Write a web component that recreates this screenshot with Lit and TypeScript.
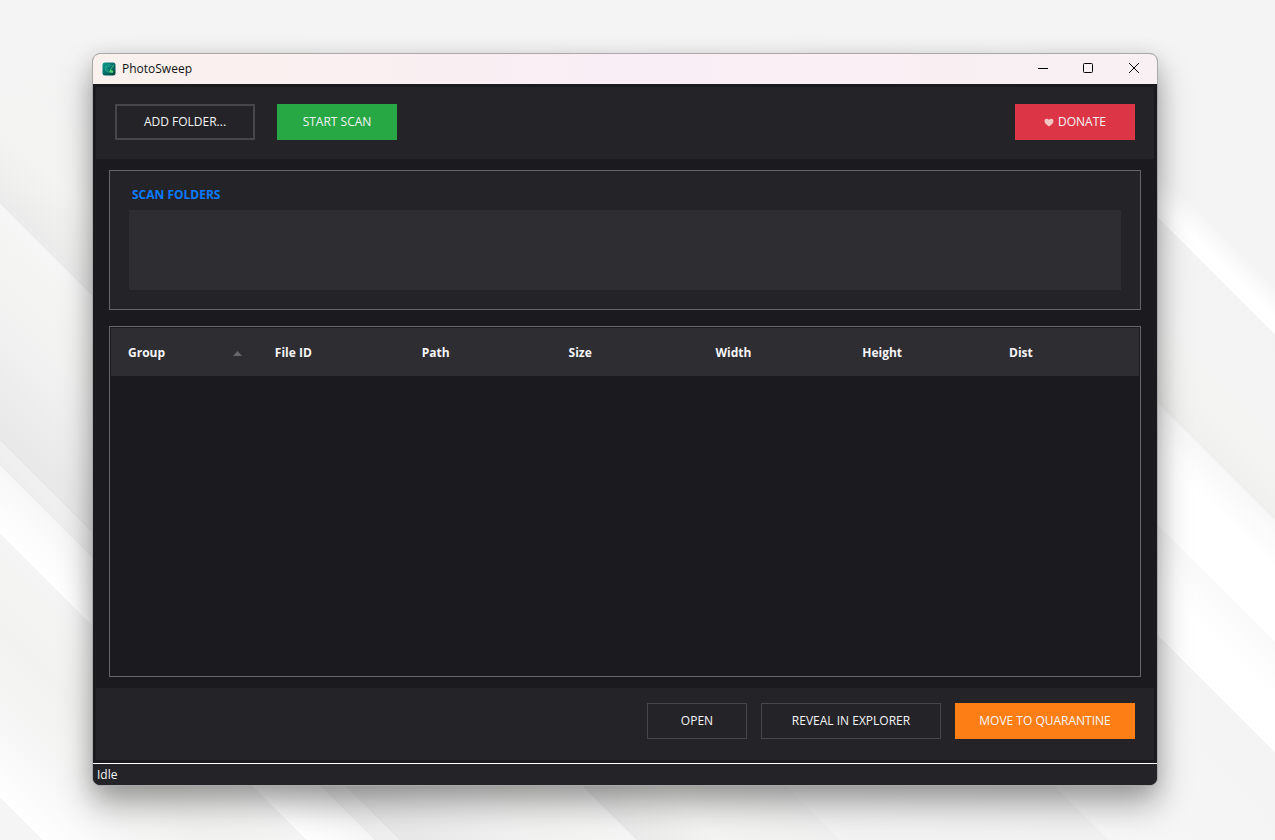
import { LitElement, html, css } from "lit";
import { customElement, state } from "lit/decorators.js";

const COLUMNS = ["Group", "File ID", "Path", "Size", "Width", "Height", "Dist"];

@customElement("app-root")
export class AppRoot extends LitElement {
  static styles = css`
    :host {
      display: flex;
      box-sizing: border-box;
      min-height: 100vh;
      padding: 53px 117px 54px 92px;
      font: 12px/16px "Open Sans", "Noto Sans", sans-serif;
      color: #f5f5f7;
      background:
        linear-gradient(180deg, #f4f4f4 30px, rgba(244, 244, 244, 0) 210px),
        linear-gradient(
          225deg,
          #f4f4f4 0%, #f4f4f4 13.5%, #fff 15%, #fff 15.8%,
          #f3f3f3 15.8%, #f4f4f4 20%, #f3f3f2 23%, #f0f0ef 24.6%,
          #f8f8f8 24.6%, #fff 27%, #fff 30.4%,
          #f9f9f9 30.4%, #fff 33%, #fff 35.6%,
          #f4f4f4 35.6%, #f6f6f6 47.6%, #f1f1f1 47.6%, #f3f3f3 60.3%,
          #f0f0f0 60.3%, #f4f4f2 66%, #ebebeb 69.9%,
          #f6f6f6 69.9%, #f3f3f1 73.5%, #f2f2f2 75%, #e9e8e8 81.1%,
          #f0f0f0 81.1%, #eeeeee 82.3%,
          #f7f7f7 82.3%, #fff 85.5%,
          #f5f5f5 85.5%, #f2f2f0 90%, #f6f6f6 94%, #fff 98%, #f5f5f5 98%
        );
    }

    * {
      box-sizing: border-box;
    }

    .window {
      flex: 1;
      min-width: 0;
      display: flex;
      flex-direction: column;
      overflow: hidden;
      border: 1px solid #a9a9a9;
      border-radius: 8px;
      background: #1b1a1e;
      background-clip: padding-box;
      box-shadow: 0 18px 32px rgba(0, 0, 0, 0.34), 0 2px 20px rgba(0, 0, 0, 0.1);
    }

    .titlebar {
      display: flex;
      align-items: center;
      height: 30px;
      padding-left: 9px;
      color: #111;
      background: linear-gradient(90deg, #f9f1ed, #f9eef5 50%, #f8f0f2);
    }

    .logo {
      width: 14px;
      height: 14px;
      margin-right: 6px;
    }

    .title {
      flex: 1;
      margin: 0;
      font-size: 12px;
      font-weight: 400;
    }

    .caption {
      display: flex;
      align-items: center;
      justify-content: center;
      width: 46px;
      height: 30px;
      padding: 0 0 2px;
      border: 0;
      background: none;
      color: #000;
    }

    .bar {
      display: flex;
      gap: 14px;
      margin: 3px 3px 0;
      padding: 17px 19px 19px;
      background: #242328;
    }

    .bar.top {
      gap: 22px;
    }

    .bar.bottom {
      justify-content: flex-end;
      margin: 0 3px 3px;
      padding: 15px 19px 21px;
    }

    .button {
      display: inline-flex;
      align-items: center;
      justify-content: center;
      gap: 4px;
      width: 120px;
      height: 36px;
      padding: 0;
      border: 1px solid #46464b;
      background: transparent;
      color: inherit;
      font: inherit;
    }

    .button.add {
      width: 140px;
      border-width: 2px;
    }

    .button.start {
      border-color: #28a745;
      background: #28a745;
    }

    .button.donate {
      margin-left: auto;
      border-color: #dc3545;
      background: #dc3545;
    }

    .button.open {
      width: 100px;
    }

    .button.wide {
      width: 180px;
    }

    .button.move {
      border-color: #fd7e14;
      background: #fd7e14;
    }

    .content {
      flex: 1;
      display: flex;
      flex-direction: column;
      gap: 16px;
      padding: 11px 16px;
    }

    .folders {
      padding: 16px 19px 19px;
      border: 1px solid #66666a;
      background: #242328;
    }

    .heading {
      margin: 0 0 7px 3px;
      font-size: 12px;
      font-weight: 700;
      color: #0a7bff;
    }

    .list {
      height: 80px;
      margin: 0;
      padding: 0;
      list-style: none;
      background: #2e2d32;
    }

    .results {
      flex: 1;
      padding: 1px;
      border: 1px solid #66666a;
    }

    .table {
      width: 100%;
      border-collapse: collapse;
      table-layout: fixed;
    }

    .cell {
      height: 48px;
      padding: 2px 16px 0 17px;
      text-align: left;
      font-weight: 700;
      background: #2e2d32;
    }

    .label {
      display: flex;
      align-items: center;
      justify-content: space-between;
    }

    .status {
      height: 22px;
      padding: 3px 4px;
      border-top: 1px solid #fff;
      background: #242328;
    }
  `;

  @state() private sortColumn = "Group";

  render() {
    return html`
      <main class="window">
        <header class="titlebar">
          <svg class="logo" viewBox="0 0 14 14" aria-hidden="true">
            <defs>
              <linearGradient id="tile" x1="0" y1="0" x2="1" y2="1">
                <stop offset="0" stop-color="#0b9b91" />
                <stop offset="1" stop-color="#033f3d" />
              </linearGradient>
            </defs>
            <rect x=".5" y=".5" width="13" height="13" rx="2.5" fill="url(#tile)" />
            <path d="M9 3.600A3.600 3.600 0 1 0 8.500 9.600M7.600 5.200A1.800 1.800 0 1 0 7.400 7.800" fill="none" stroke="#26b59a" stroke-width=".8" />
            <path d="M11.700 3 8.500 7.800" stroke="#3ccf8a" stroke-width=".9" />
            <path d="m8.400 7.500 2.900 1.500-.6 2-3.500-.7Z" fill="#4fdc69" />
          </svg>
          <h1 class="title">PhotoSweep</h1>
          <button class="caption" aria-label="Minimize">
            <svg width="12" height="12" viewBox="0 0 12 12"><path d="M2 6.500h10" stroke="currentColor" /></svg>
          </button>
          <button class="caption" aria-label="Maximize">
            <svg width="12" height="12" viewBox="0 0 12 12"><rect x="1.500" y="1.500" width="9" height="9" rx="1" fill="none" stroke="currentColor" /></svg>
          </button>
          <button class="caption" aria-label="Close">
            <svg width="12" height="12" viewBox="0 0 12 12"><path d="m1 1 10 10M11 1 1 11" stroke="currentColor" /></svg>
          </button>
        </header>

        <div class="bar top">
          <button class="button add">ADD FOLDER...</button>
          <button class="button start">START SCAN</button>
          <button class="button donate">
            <svg width="10" height="9" viewBox="0 0 10 9" aria-hidden="true">
              <path d="M5 8.500C2 6.400.5 4.800.5 3 .5 1.500 1.500.8 2.700.8 3.700.8 4.600 1.300 5 2 5.400 1.300 6.300.8 7.300.8 8.500.8 9.500 1.500 9.500 3 9.500 4.800 8 6.400 5 8.500Z" fill="#f3c6c0" />
            </svg>
            DONATE
          </button>
        </div>

        <div class="content">
          <section class="folders">
            <h2 class="heading">SCAN FOLDERS</h2>
            <ul class="list" aria-label="Scan folders"></ul>
          </section>
          <section class="results" aria-label="Results">
            <table class="table">
              <thead>
                <tr>
                  ${COLUMNS.map(
                    (name) => html`<th class="cell" scope="col" @click=${() => (this.sortColumn = name)}>
                      <span class="label">
                        ${name}
                        ${name === this.sortColumn
                          ? html`<svg width="9" height="5" viewBox="0 0 9 5" aria-hidden="true"><path d="M4.500 0 9 5H0Z" fill="#69696c" /></svg>`
                          : ""}
                      </span>
                    </th>`
                  )}
                </tr>
              </thead>
              <tbody></tbody>
            </table>
          </section>
        </div>

        <div class="bar bottom">
          <button class="button open">OPEN</button>
          <button class="button wide">REVEAL IN EXPLORER</button>
          <button class="button wide move">MOVE TO QUARANTINE</button>
        </div>
        <footer class="status">Idle</footer>
      </main>
    `;
  }
}
